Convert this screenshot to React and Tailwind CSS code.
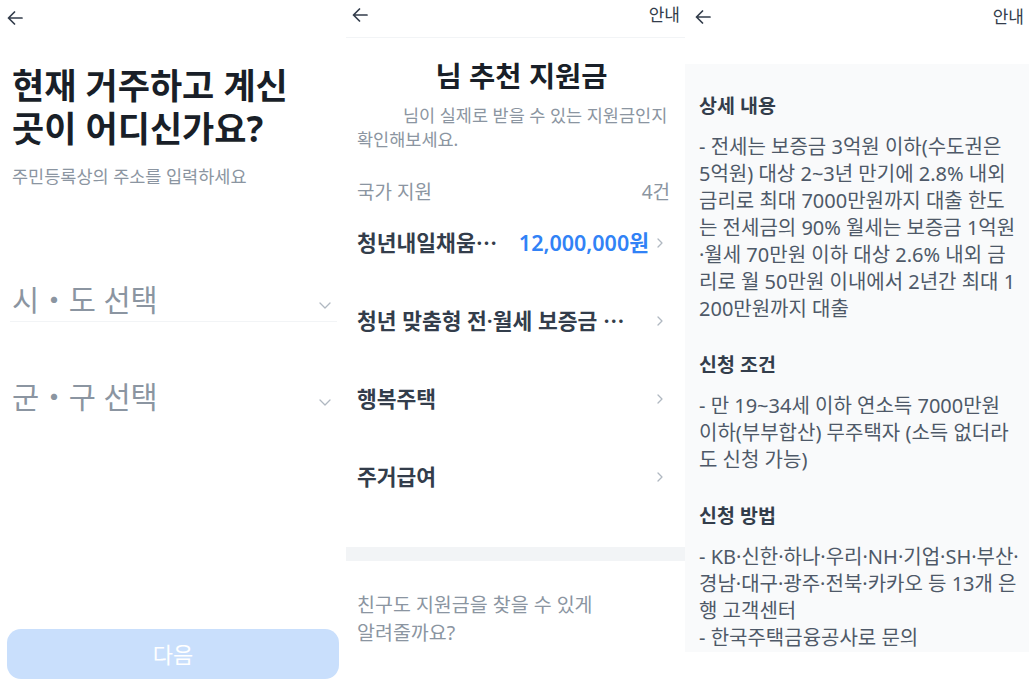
const BackArrow = () => (
  <svg width="16" height="14" viewBox="0 0 16 14" fill="none" stroke="#333d4b" strokeWidth="1.7" strokeLinecap="round" strokeLinejoin="round">
    <path d="M15 7H1.5M7.5 1 1.5 7l6 6" />
  </svg>
);

const ChevronDown = () => (
  <svg width="12" height="7" viewBox="0 0 12 7" fill="none" stroke="#b0b8c1" strokeWidth="1.3" strokeLinecap="round" strokeLinejoin="round">
    <path d="M1 1l5 5 5-5" />
  </svg>
);

const ChevronRight = () => (
  <svg width="6" height="10" viewBox="0 0 6 10" fill="none" stroke="#b0b8c1" strokeWidth="1.3" strokeLinecap="round" strokeLinejoin="round">
    <path d="M1 1l4 4-4 4" />
  </svg>
);

// title text + whether it was cut off with an ellipsis
const programs = [
  { title: '청년내일채움', cut: true, amount: '12,000,000원' },
  { title: '청년 맞춤형 전·월세 보증금 ', cut: true },
  { title: '행복주택' },
  { title: '주거급여' },
];

const details = [
  {
    heading: '상세 내용',
    lines: [
      '- 전세는 보증금 3억원 이하(수도권은',
      '5억원) 대상 2~3년 만기에 2.8% 내외',
      '금리로 최대 7000만원까지 대출 한도',
      '는 전세금의 90% 월세는 보증금 1억원',
      '·월세 70만원 이하 대상 2.6% 내외 금',
      '리로 월 50만원 이내에서 2년간 최대 1',
      '200만원까지 대출',
    ],
  },
  {
    heading: '신청 조건',
    lines: [
      '- 만 19~34세 이하 연소득 7000만원',
      '이하(부부합산) 무주택자 (소득 없더라',
      '도 신청 가능)',
    ],
  },
  {
    heading: '신청 방법',
    lines: [
      '- KB·신한·하나·우리·NH·기업·SH·부산·',
      '경남·대구·광주·전북·카카오 등 13개 은',
      '행 고객센터',
      '- 한국주택금융공사로 문의',
    ],
  },
];

function AddressStep() {
  return (
    <section className="w-[346px] shrink-0 h-[686px] flex flex-col bg-white">
      <header className="h-[36px] flex items-center pl-[7px]">
        <BackArrow />
      </header>
      <h1 className="mt-[28px] px-[12px] text-[35px] leading-[43px] font-bold text-[#191f28]">
        현재 거주하고 계신
        <br />
        곳이 어디신가요?
      </h1>
      <p className="mt-[14px] px-[12px] text-[17.5px] leading-[24px] text-[#8b95a1]">주민등록상의 주소를 입력하세요</p>

      <button className="mt-[94px] ml-[10px] mr-[9px] pl-[2px] pr-[6px] pb-[3px] flex items-center justify-between border-b border-[#f2f4f6] text-left">
        <span className="text-[29.5px] leading-[36px] text-[#8b95a1]">시・도 선택</span>
        <span className="mt-[10px]"><ChevronDown /></span>
      </button>
      <button className="mt-[57px] ml-[10px] mr-[9px] pl-[2px] pr-[6px] flex items-center justify-between text-left">
        <span className="text-[29.5px] leading-[36px] text-[#8b95a1]">군・구 선택</span>
        <span className="mt-[10px]"><ChevronDown /></span>
      </button>

      <button className="mt-auto mb-[7px] mx-[7px] h-[50px] rounded-[14px] bg-[#c9dffc] text-white text-[22px]">다음</button>
    </section>
  );
}

function Recommendations() {
  return (
    <section className="w-[339px] shrink-0 h-[686px] flex flex-col bg-white">
      <header className="h-[38px] pb-[8px] flex items-center justify-between pl-[6px] pr-[5px] border-b border-[#f2f4f6]">
        <BackArrow />
        <span className="text-[17px] text-[#333d4b]">안내</span>
      </header>
      <h2 className="mt-[20px] pl-[12px] text-center text-[28.5px] leading-[36px] font-bold text-[#191f28]">님 추천 지원금</h2>
      <p className="mt-[9px] px-[11px] indent-[46px] text-[17.5px] leading-[24px] text-[#8b95a1]">
        님이 실제로 받을 수 있는 지원금인지
        <br />
        확인해보세요.
      </p>
      <div className="mt-[29px] pl-[11px] pr-[15px] flex justify-between text-[19px] leading-[24px] text-[#8b95a1]">
        <span>국가 지원</span>
        <span>4건</span>
      </div>
      <ul>
        {programs.map((p) => (
          <li key={p.title} className="h-[78px] pl-[11px] pr-[22px] flex items-center">
            <span className="text-[21.5px] font-semibold text-[#333d4b] whitespace-pre">
              {p.title}
              {p.cut && <span className="font-['Noto_Sans_CJK_KR',sans-serif]">…</span>}
            </span>
            {p.amount && <span className="ml-auto mr-[8px] text-[21.5px] font-semibold text-[#3182f6]">{p.amount}</span>}
            <span className={p.amount ? '' : 'ml-auto'}>
              <ChevronRight />
            </span>
          </li>
        ))}
      </ul>
      <div className="mt-[31px] h-[14px] bg-[#f2f4f6]" />
      <p className="mt-[30px] px-[11px] text-[19.5px] leading-[28px] text-[#8b95a1]">
        친구도 지원금을 찾을 수 있게
        <br />
        알려줄까요?
      </p>
    </section>
  );
}

function Details() {
  return (
    <section className="flex-1 min-w-0 h-[686px] flex flex-col bg-white">
      <header className="h-[34px] flex items-center justify-between pl-[10px] pr-[5px]">
        <BackArrow />
        <span className="text-[17px] text-[#333d4b]">안내</span>
      </header>
      <div className="mt-[30px] h-[588px] overflow-hidden bg-[#f9fafb] px-[14px] pt-[28px]">
        {details.map((d, i) => (
          <div key={d.heading} className={i > 0 ? 'mt-[29px]' : ''}>
            <h3 className="text-[19.5px] leading-[27px] font-bold text-[#333d4b]">{d.heading}</h3>
            <p className="mt-[14px] text-[20px] leading-[27px] text-[#4e5968] whitespace-nowrap">
              {d.lines.map((line) => (
                <span key={line} className="block">{line}</span>
              ))}
            </p>
          </div>
        ))}
      </div>
    </section>
  );
}

export default function App() {
  return (
    <div className="w-[1029px] h-[686px] flex bg-white overflow-hidden font-['Noto_Sans','Noto_Sans_CJK_KR',sans-serif]">
      <AddressStep />
      <Recommendations />
      <Details />
    </div>
  );
}
